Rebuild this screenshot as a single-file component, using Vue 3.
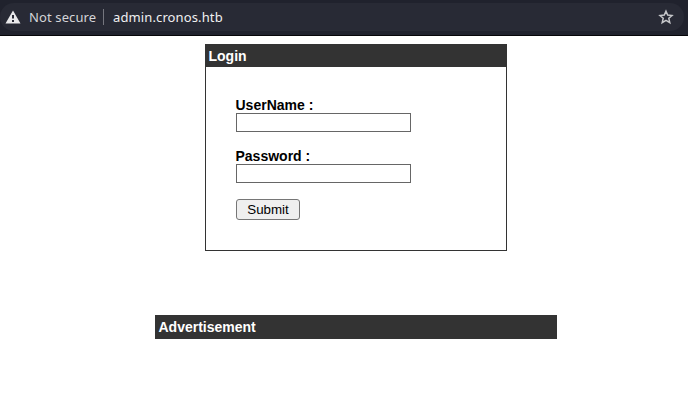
<script setup>
import { ref } from 'vue'

const username = ref('')
const password = ref('')
</script>

<template>
  <div class="window">
    <header class="toolbar">
      <div class="address">
        <svg class="warning" width="16" height="14" viewBox="0 0 16 14">
          <path fill="#e8e8ea" fill-rule="evenodd" d="M8 0.5L15.5 13.5H0.5ZM7 5V8.5H9V5ZM7 10V12H9V10Z" />
        </svg>
        <span class="security">Not secure</span>
        <span class="divider"></span>
        <span class="url">admin.cronos.htb</span>
        <svg class="star" width="16" height="16" viewBox="0 0 16 16">
          <path fill="none" stroke="#c6c7ca" stroke-width="1.5" d="M8 2.2L9.7 6.1L14 6.5L10.8 9.3L11.8 13.6L8 11.3L4.2 13.6L5.2 9.3L2 6.5L6.3 6.1Z" />
        </svg>
      </div>
    </header>
    <main class="page">
      <section class="login">
        <div class="title">Login</div>
        <form class="form" @submit.prevent>
          <label for="username">UserName :</label>
          <input id="username" v-model="username" type="text" />
          <label for="password">Password :</label>
          <input id="password" v-model="password" type="password" />
          <button type="submit">Submit</button>
        </form>
      </section>
      <section class="ad title">Advertisement</section>
    </main>
  </div>
</template>

<style>
body {
  margin: 0;
  background: #fff;
}
</style>

<style scoped>
.window {
  height: 403px;
  overflow: hidden;
  background: #fff;
  font-family: "Liberation Sans", Arial, sans-serif;
}
.toolbar {
  box-sizing: border-box;
  height: 36px;
  padding: 3px 4px 0 0;
  background: #20222d;
  border-bottom: 1px solid #060609;
}
.address {
  display: flex;
  align-items: center;
  box-sizing: border-box;
  height: 28px;
  padding: 0 10px 0 5px;
  border-radius: 14px;
  background: #282a35;
  font-family: "Noto Sans", sans-serif;
  font-size: 13px;
  line-height: 18px;
  white-space: nowrap;
}
.security {
  width: 67px;
  margin-left: 8px;
  color: #d4d5d8;
  letter-spacing: 0.12px;
}
.divider {
  width: 1px;
  height: 16px;
  margin: 0 9px 0 7px;
  background: #75767e;
}
.url {
  color: #f0f0f1;
  letter-spacing: 0.12px;
}
.star {
  margin-left: auto;
}
.page {
  display: flex;
  flex-direction: column;
  align-items: center;
  padding: 8px 0 0 24px;
}
.title {
  box-sizing: border-box;
  background: #333;
  color: #fff;
  font-size: 14px;
  font-weight: bold;
  line-height: 16px;
}
.login {
  box-sizing: border-box;
  width: 302px;
  height: 207px;
  border: 1px solid #333;
}
.login .title {
  height: 22px;
  padding: 3px 2.5px;
}
.form {
  display: flex;
  flex-direction: column;
  align-items: flex-start;
  padding: 30px;
}
label {
  margin-left: -0.5px;
  color: #000;
  font-size: 14px;
  font-weight: bold;
  line-height: 16px;
}
input {
  box-sizing: border-box;
  width: 175px;
  height: 19px;
  margin: 0 0 16px;
  padding: 1px 2px;
  border: 1px solid #666;
  border-radius: 0;
  background: #fff;
  outline: none;
}
button {
  box-sizing: border-box;
  width: 64px;
  height: 21px;
  padding: 0;
  border: 1px solid #767676;
  border-radius: 3px;
  background: #efefef;
  color: #000;
  font-family: "Liberation Sans", Arial, sans-serif;
  font-size: 13.333px;
  line-height: 19px;
}
.ad {
  width: 402px;
  height: 24px;
  margin-top: 64px;
  padding: 4px 3.5px;
}
</style>
